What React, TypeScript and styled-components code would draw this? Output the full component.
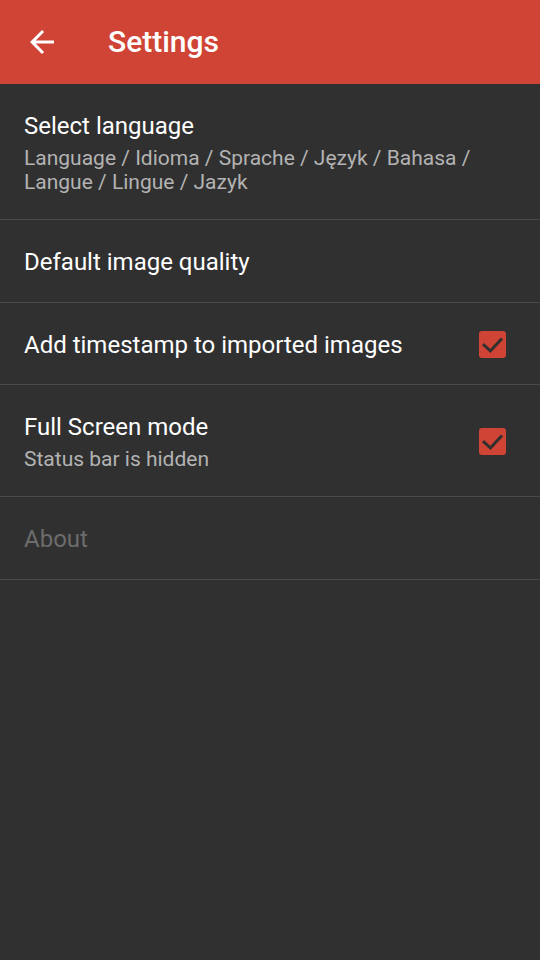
import styled, { createGlobalStyle } from 'styled-components'

const GlobalStyle = createGlobalStyle`
  html, body {
    margin: 0;
    padding: 0;
    background: #303030;
  }
  body {
    font-family: Roboto, 'Noto Sans', sans-serif;
  }
`

const Screen = styled.div`
  width: 540px;
  min-height: 960px;
  background: #303030;
  display: flex;
  flex-direction: column;
`

const Toolbar = styled.header`
  height: 84px;
  background: #cf4434;
  display: flex;
  align-items: center;
  padding-left: 24px;
  box-sizing: border-box;
`

const BackButton = styled.div`
  width: 36px;
  height: 36px;
  display: flex;
  align-items: center;
  justify-content: center;
  margin-right: 48px;
`

const ToolbarTitle = styled.h1`
  margin: 0;
  color: #fff;
  font-size: 30px;
  font-weight: 500;
  line-height: 36px;
`

const List = styled.div`
  display: flex;
  flex-direction: column;
`

const Row = styled.div`
  display: flex;
  align-items: center;
  padding: 28px 24px 25.5px 24px;
  border-bottom: 1.5px solid #4a4a4a;
  min-height: 28px;
`

const RowText = styled.div`
  flex: 1;
  display: flex;
  flex-direction: column;
  gap: 5.5px;
`

const Title = styled.div<{ $disabled?: boolean }>`
  font-size: 24px;
  line-height: 28px;
  color: ${props => props.$disabled ? '#6c6c6c' : '#ffffff'};
`

const Summary = styled.div`
  font-size: 21px;
  line-height: 24px;
  color: #b3b3b3;
  padding-right: 40px;
`

const CheckBox = styled.div`
  width: 27px;
  height: 27px;
  border-radius: 3px;
  background: #cf4434;
  margin-right: 10px;
  display: flex;
  align-items: center;
  justify-content: center;
`

function Check() {
  return (
    <CheckBox>
      <svg width="27" height="27" viewBox="0 0 27 27">
        <path d="M4 13.2 L11.4 20 L23 7.6" fill="none" stroke="#303030" strokeWidth="3" />
      </svg>
    </CheckBox>
  )
}

function App() {
  return (
    <Screen>
      <GlobalStyle />
      <Toolbar>
        <BackButton>
          <svg width="36" height="36" viewBox="0 0 24 24">
            <path d="M20 11H7.83l5.59-5.59L12 4l-8 8 8 8 1.41-1.41L7.83 13H20v-2z" fill="#fff" />
          </svg>
        </BackButton>
        <ToolbarTitle>Settings</ToolbarTitle>
      </Toolbar>

      <List>
        <Row>
          <RowText>
            <Title>Select language</Title>
            <Summary>Language / Idioma / Sprache / Język / Bahasa / Langue / Lingue / Jazyk</Summary>
          </RowText>
        </Row>
        <Row>
          <RowText>
            <Title>Default image quality</Title>
          </RowText>
        </Row>
        <Row>
          <RowText>
            <Title>Add timestamp to imported images</Title>
          </RowText>
          <Check />
        </Row>
        <Row>
          <RowText>
            <Title>Full Screen mode</Title>
            <Summary>Status bar is hidden</Summary>
          </RowText>
          <Check />
        </Row>
        <Row>
          <RowText>
            <Title $disabled>About</Title>
          </RowText>
        </Row>
      </List>
    </Screen>
  )
}

export default App
